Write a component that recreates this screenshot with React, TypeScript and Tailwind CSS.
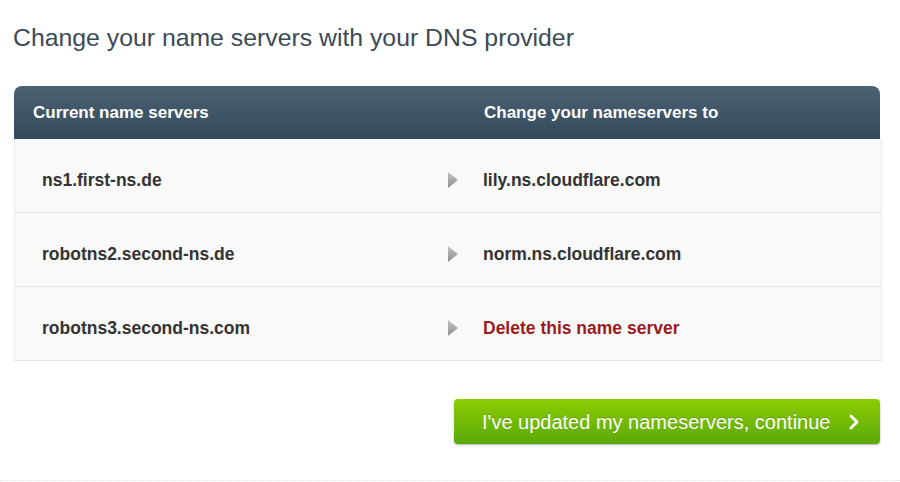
import React from "react";

function Arrow() {
  return (
    <svg width="12" height="18" viewBox="0 0 12 18" className="shrink-0">
      <defs>
        <linearGradient id="ag" x1="0" y1="0" x2="0" y2="1">
          <stop offset="0" stopColor="#c4c4c4" />
          <stop offset="1" stopColor="#8e8e8e" />
        </linearGradient>
      </defs>
      <polygon points="1,1 11,9 1,17" fill="url(#ag)" />
    </svg>
  );
}

const rows = [
  { cur: "ns1.first-ns.de", next: "lily.ns.cloudflare.com", del: false },
  { cur: "robotns2.second-ns.de", next: "norm.ns.cloudflare.com", del: false },
  { cur: "robotns3.second-ns.com", next: "Delete this name server", del: true },
];

export default function App() {
  return (
    <div
      className="w-[900px] h-[482px] bg-white overflow-hidden relative"
      style={{ fontFamily: '"Liberation Sans", Arial, sans-serif' }}
    >
      <div className="pl-[13px] pr-[19px] pt-[23px]">
        <h1 className="text-[24.8px] leading-[30px] text-[#3b4a57] font-normal">
          Change your name servers with your DNS provider
        </h1>
        <div className="mt-[33px] ml-[1px]">
          <div className="h-[53px] rounded-t-[8px] bg-gradient-to-b from-[#4b6174] to-[#33495c] flex items-center text-white font-bold text-[17px] w-[866px]">
            <div className="w-[470px] pl-[19px]">Current name servers</div>
            <div>Change your nameservers to</div>
          </div>
          <div className="border-x border-[#ebebeb] w-[868px]">
            {rows.map((r, i) => (
              <div
                key={i}
                className="h-[74px] flex items-center pt-[9px] bg-[#f9f9f9] border-b border-[#e6e6e6] font-bold text-[17.5px] text-[#333333]"
              >
                <div className="w-[432px] pl-[27px]">{r.cur}</div>
                <Arrow />
                <div className={"pl-[24px] " + (r.del ? "text-[#9b1c1c]" : "")}>{r.next}</div>
              </div>
            ))}
          </div>
        </div>
        <div className="flex justify-end mt-[38px] pr-[1px]">
          <button className="w-[426px] h-[45px] rounded-[4px] bg-gradient-to-b from-[#8dcd00] to-[#5aa80a] shadow-[0_1px_2px_rgba(0,0,0,0.3)] flex items-center pl-[28px] text-white text-[20px] [text-shadow:0_-1px_0_rgba(0,0,0,0.2)]">
            <span>I've updated my nameservers, continue</span>
            <svg width="12" height="16" viewBox="0 0 12 16" className="ml-[18px]">
              <polyline points="3,2 9,8 3,14" fill="none" stroke="white" strokeWidth="3" strokeLinecap="round" strokeLinejoin="round" />
            </svg>
          </button>
        </div>
      </div>
      <div className="absolute left-0 right-0 top-[480px] border-t border-dotted border-[#e2e2e2]" />
    </div>
  );
}
